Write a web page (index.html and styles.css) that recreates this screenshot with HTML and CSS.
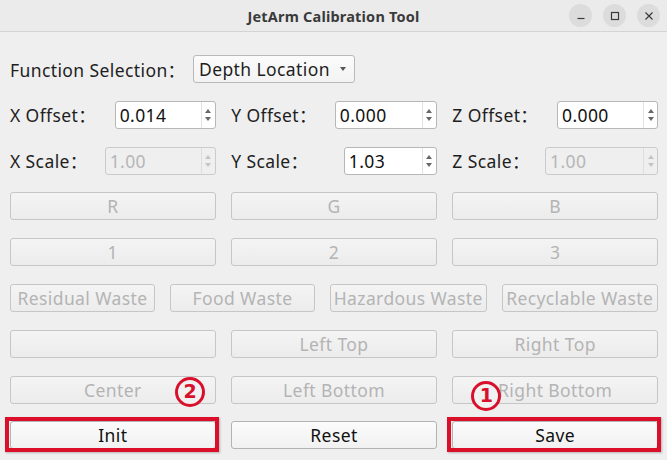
FILE: index.html
```html
<!DOCTYPE html>
<html>
<head>
<meta charset="utf-8">
<link rel="stylesheet" href="styles.css">
</head>
<body>
<div class="window">
  <header class="titlebar">
    <div class="title">JetArm Calibration Tool</div>
    <div class="wm">
      <span class="wm-btn"><svg width="10" height="10" viewBox="0 0 10 10"><path d="M1.5 7.5h7" stroke="#3a3a3a" stroke-width="1.2"/></svg></span>
      <span class="wm-btn"><svg width="10" height="10" viewBox="0 0 10 10"><rect x="1.5" y="1.5" width="7" height="7" fill="none" stroke="#3a3a3a" stroke-width="1.2"/></svg></span>
      <span class="wm-btn"><svg width="10" height="10" viewBox="0 0 10 10"><path d="M1.5 1.5l7 7M8.5 1.5l-7 7" stroke="#3a3a3a" stroke-width="1.2"/></svg></span>
    </div>
  </header>
  <main class="content">
    <div class="row-func">
      <span class="label func-label">Function Selection：</span>
      <div class="combo"><span>Depth Location</span><span class="caret"></span></div>
    </div>
    <div class="grid3">
      <div class="field"><span class="label">X Offset：</span><div class="spin w-101"><span class="val">0.014</span><span class="arrows"><i class="up"></i><i class="down"></i></span></div></div>
      <div class="field"><span class="label">Y Offset：</span><div class="spin w-102"><span class="val">0.000</span><span class="arrows"><i class="up"></i><i class="down"></i></span></div></div>
      <div class="field"><span class="label">Z Offset：</span><div class="spin w-101"><span class="val">0.000</span><span class="arrows"><i class="up"></i><i class="down"></i></span></div></div>
    </div>
    <div class="grid3">
      <div class="field"><span class="label">X Scale：</span><div class="spin w-111 disabled"><span class="val">1.00</span><span class="arrows"><i class="up"></i><i class="down"></i></span></div></div>
      <div class="field"><span class="label">Y Scale：</span><div class="spin w-93"><span class="val">1.03</span><span class="arrows"><i class="up"></i><i class="down"></i></span></div></div>
      <div class="field"><span class="label">Z Scale：</span><div class="spin w-113 disabled"><span class="val">1.00</span><span class="arrows"><i class="up"></i><i class="down"></i></span></div></div>
    </div>
    <div class="grid3">
      <button class="btn" disabled>R</button>
      <button class="btn" disabled>G</button>
      <button class="btn" disabled>B</button>
    </div>
    <div class="grid3">
      <button class="btn" disabled>1</button>
      <button class="btn" disabled>2</button>
      <button class="btn" disabled>3</button>
    </div>
    <div class="grid4">
      <button class="btn" disabled>Residual Waste</button>
      <button class="btn" disabled>Food Waste</button>
      <button class="btn" disabled>Hazardous Waste</button>
      <button class="btn" disabled>Recyclable Waste</button>
    </div>
    <div class="grid3">
      <button class="btn" disabled></button>
      <button class="btn" disabled>Left Top</button>
      <button class="btn" disabled>Right Top</button>
    </div>
    <div class="grid3">
      <div class="cell"><button class="btn" disabled>Center</button><span class="badge badge-2">2</span></div>
      <div class="cell"><button class="btn" disabled>Left Bottom</button></div>
      <div class="cell"><button class="btn" disabled>Right Bottom</button><span class="badge badge-1">1</span></div>
    </div>
    <div class="grid3">
      <div class="cell marked"><button class="btn on">Init</button></div>
      <div class="cell"><button class="btn on">Reset</button></div>
      <div class="cell marked"><button class="btn on">Save</button></div>
    </div>
  </main>
</div>
</body>
</html>
```

FILE: styles.css
```css
* { box-sizing: border-box; }
html, body { margin: 0; padding: 0; }
body {
  width: 667px;
  height: 460px;
  overflow: hidden;
  background: #efefef;
  font-family: "Noto Sans", "Noto Sans CJK SC", sans-serif;
  color: #1e1e1e;
}
.window { width: 667px; height: 460px; display: flex; flex-direction: column; }
.titlebar {
  height: 32px;
  flex: none;
  background: #ebebeb;
  border-bottom: 1px solid #d4d4d4;
  display: flex;
  align-items: center;
  justify-content: center;
  position: relative;
}
.title {
  font-family: "Noto Sans", sans-serif;
  font-weight: 700;
  font-size: 14.5px;
  letter-spacing: 0.2px;
  color: #3a3a3a;
}
.wm {
  position: absolute;
  right: 7px;
  top: 4px;
  display: flex;
  gap: 11px;
}
.wm-btn {
  width: 23px;
  height: 23px;
  border-radius: 50%;
  background: #dcdcdc;
  display: flex;
  align-items: center;
  justify-content: center;
}
.content {
  padding: 23px 9px 0 10px;
  display: flex;
  flex-direction: column;
  gap: 17.8px;
}
.label { font-size: 17.5px; letter-spacing: 0.4px; white-space: nowrap; color: #1e1e1e; }
.row-func { display: flex; align-items: center; height: 28px; }
.func-label { width: 183px; }
.combo {
  width: 162px;
  height: 28px;
  background: linear-gradient(#fbfbfb, #f3f3f3);
  border: 1px solid #b9b9b9;
  border-radius: 3px;
  display: flex;
  align-items: center;
  justify-content: space-between;
  padding: 0 8px 0 5px;
  font-size: 17.5px;
  letter-spacing: 0.4px;
}
.caret {
  width: 0; height: 0;
  border-left: 3.5px solid transparent;
  border-right: 3.5px solid transparent;
  border-top: 4px solid #555;
}
.grid3 {
  display: grid;
  grid-template-columns: 1fr 1fr 1fr;
  column-gap: 15.5px;
  height: 28px;
}
.grid4 {
  display: grid;
  grid-template-columns: 145px 145px 1fr 1fr;
  column-gap: 15px;
  height: 28px;
}
.field { display: flex; align-items: center; justify-content: space-between; }
.spin {
  height: 28px;
  background: #fff;
  border: 1px solid #b7b7b7;
  border-radius: 3px;
  display: flex;
  align-items: center;
  justify-content: space-between;
  padding-left: 4px;
}
.w-101 { width: 101px; }
.w-102 { width: 102px; }
.w-111 { width: 111px; }
.w-93 { width: 93px; }
.w-113 { width: 113px; }
.val { font-size: 17.5px; letter-spacing: 0.4px; color: #111; }
.arrows {
  width: 14px;
  height: 100%;
  display: flex;
  flex-direction: column;
  align-items: center;
  justify-content: center;
  gap: 4px;
  border-left: 1px solid #e2e2e2;
}
.arrows i { width: 0; height: 0; border-left: 3.5px solid transparent; border-right: 3.5px solid transparent; }
.arrows .up { border-bottom: 4px solid #666; }
.arrows .down { border-top: 4px solid #666; }
.spin.disabled { background: #efefef; border-color: #cbcbcb; }
.spin.disabled .val { color: #b6b6b6; }
.spin.disabled .arrows .up { border-bottom-color: #c4c4c4; }
.spin.disabled .arrows .down { border-top-color: #c4c4c4; }
.spin.disabled .arrows { border-left-color: #dedede; }
.btn {
  height: 28px;
  width: 100%;
  margin: 0;
  padding: 0;
  font-family: "Noto Sans", sans-serif;
  font-size: 17.5px;
  letter-spacing: 0.4px;
  background: linear-gradient(#f4f4f4, #ececec);
  border: 1px solid #c6c6c6;
  border-radius: 3px;
  color: #b4b4b4;
  white-space: nowrap;
  overflow: hidden;
}
.btn.on { color: #111; background: linear-gradient(#fbfbfb, #f1f1f1); border-color: #b3b3b3; }
.cell { position: relative; }
.marked::after {
  content: "";
  position: absolute;
  left: -5px;
  right: -3px;
  top: -4px;
  bottom: -3px;
  border: 4px solid #dc0f2b;
  box-shadow: 1px 1px 2px rgba(0,0,0,0.25);
  pointer-events: none;
}
.badge {
  position: absolute;
  width: 30px;
  height: 30px;
  border-radius: 50%;
  border: 3px solid #d8102c;
  background: #f1f1f1;
  color: #d8102c;
  font-family: "DejaVu Sans", sans-serif;
  font-weight: 700;
  font-size: 19px;
  display: flex;
  align-items: center;
  justify-content: center;
  line-height: 1;
}
.badge-2 { left: 165px; top: 1px; }
.badge-1 { left: 19px; top: 5px; }
```
